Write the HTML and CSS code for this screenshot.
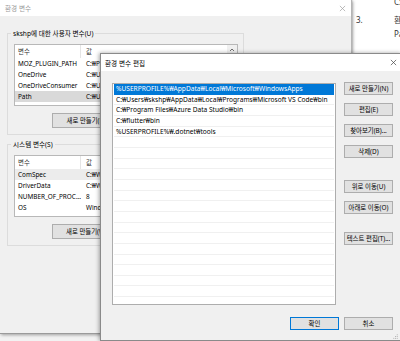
FILE: index.html
```html
<!DOCTYPE html>
<html lang="ko">
<head>
<meta charset="UTF-8">
<title>환경 변수 편집</title>
<link rel="stylesheet" href="styles.css">
</head>

<body>

<div class="desk">

  <div class="doc">
    <p class="doc-line doc-indent">C:₩Users₩skshp</p>
    <p class="doc-line doc-item"><span class="doc-num">3.</span>환경 변수에서</p>
    <p class="doc-line doc-indent">Path를 선택합니다.</p>
  </div>

  <div class="win win-back">
    <div class="titlebar inactive">
      <span class="title">환경 변수</span>
      <svg class="close" viewBox="0 0 8 8"><path d="M1 1L7 7M7 1L1 7"/></svg>
    </div>
    <div class="win-body">

      <div class="group">
        <span class="group-label">skshp에 대한 사용자 변수(U)</span>
        <div class="listview">
          <div class="lv-table">
            <div class="lv-head"><span class="lv-name">변수</span><span class="lv-value">값</span></div>
            <div class="lv-row"><span class="lv-name">MOZ_PLUGIN_PATH</span><span class="lv-value">C:₩Program Files (x86)₩Foxit Software₩Foxit PDF Reader₩plugins₩</span></div>
            <div class="lv-row"><span class="lv-name">OneDrive</span><span class="lv-value">C:₩Users₩skshp₩OneDrive</span></div>
            <div class="lv-row"><span class="lv-name">OneDriveConsumer</span><span class="lv-value">C:₩Users₩skshp₩OneDrive</span></div>
            <div class="lv-row lv-selected"><span class="lv-name">Path</span><span class="lv-value">C:₩Users₩skshp₩AppData₩Local₩Microsoft₩WindowsApps;</span></div>
          </div>
          <div class="lv-scroll">
            <svg class="lv-arrow" viewBox="0 0 8 8"><path d="M2 5L4 3L6 5"/></svg>
          </div>
        </div>
        <div class="group-buttons">
          <button class="btn btn-wide">새로 만들기(N)...</button>
          <button class="btn btn-wide">편집(I)...</button>
          <button class="btn btn-wide">삭제(L)</button>
        </div>
      </div>

      <div class="group group-system">
        <span class="group-label">시스템 변수(S)</span>
        <div class="listview">
          <div class="lv-table">
            <div class="lv-head"><span class="lv-name">변수</span><span class="lv-value">값</span></div>
            <div class="lv-row lv-soft"><span class="lv-name">ComSpec</span><span class="lv-value">C:₩WINDOWS₩system32₩cmd.exe</span></div>
            <div class="lv-row"><span class="lv-name">DriverData</span><span class="lv-value">C:₩Windows₩System32₩Drivers₩DriverData</span></div>
            <div class="lv-row"><span class="lv-name">NUMBER_OF_PROCESSORS</span><span class="lv-value">8</span></div>
            <div class="lv-row"><span class="lv-name">OS</span><span class="lv-value">Windows_NT</span></div>
            <div class="lv-row"><span class="lv-name">Path</span><span class="lv-value">C:₩WINDOWS₩system32;C:₩WINDOWS</span></div>
          </div>
        </div>
        <div class="group-buttons">
          <button class="btn btn-wide">새로 만들기(W)...</button>
          <button class="btn btn-wide">편집(I)...</button>
          <button class="btn btn-wide">삭제(L)</button>
        </div>
      </div>

    </div>
  </div>

  <div class="win win-front">
    <div class="titlebar">
      <span class="title">환경 변수 편집</span>
      <svg class="close" viewBox="0 0 8 8"><path d="M1 1L7 7M7 1L1 7"/></svg>
    </div>
    <div class="edit-body">
      <div class="path-list">
        <div class="path-row path-selected">%USERPROFILE%₩AppData₩Local₩Microsoft₩WindowsApps</div>
        <div class="path-row">C:₩Users₩skshp₩AppData₩Local₩Programs₩Microsoft VS Code₩bin</div>
        <div class="path-row">C:₩Program Files₩Azure Data Studio₩bin</div>
        <div class="path-row">C:₩flutter₩bin</div>
        <div class="path-row">%USERPROFILE%₩.dotnet₩tools</div>
        <div class="path-row"></div>
        <div class="path-row"></div>
        <div class="path-row"></div>
        <div class="path-row"></div>
        <div class="path-row"></div>
        <div class="path-row"></div>
        <div class="path-row"></div>
        <div class="path-row"></div>
        <div class="path-row"></div>
        <div class="path-row"></div>
        <div class="path-row"></div>
        <div class="path-row"></div>
        <div class="path-row"></div>
        <div class="path-row"></div>
        <div class="path-row"></div>
        <div class="path-row"></div>
      </div>
      <div class="side-buttons">
        <button class="btn">새로 만들기(N)</button>
        <button class="btn">편집(E)</button>
        <button class="btn">찾아보기(B)...</button>
        <button class="btn">삭제(D)</button>
        <button class="btn btn-gap">위로 이동(U)</button>
        <button class="btn">아래로 이동(O)</button>
        <button class="btn btn-gap-sm">텍스트 편집(T)...</button>
      </div>
    </div>
    <div class="edit-footer">
      <button class="btn btn-default">확인</button>
      <button class="btn">취소</button>
    </div>
    <svg class="grip" viewBox="0 0 6 6">
      <circle cx="5" cy="1" r="0.6"/>
      <circle cx="5" cy="3" r="0.6"/>
      <circle cx="3" cy="3" r="0.6"/>
      <circle cx="5" cy="5" r="0.6"/>
      <circle cx="3" cy="5" r="0.6"/>
      <circle cx="1" cy="5" r="0.6"/>
    </svg>
  </div>

</div>

</body>
</html>
```

FILE: styles.css
```css
* {
  box-sizing: border-box;
}
body {
  margin: 0;
  font-family: "Noto Sans", "Noto Sans CJK KR", sans-serif;
  font-size: 6.4px;
  color: #000;
  background-color: #fff;
}
.desk {
  position: relative;
  width: 400px;
  height: 341px;
  overflow: hidden;
  background-color: #f2f2f2;
}

/* document behind, on the right */
.doc {
  position: absolute;
  left: 353px;
  top: 0;
  width: 47px;
  height: 53px;
  padding: 0 0 0 3px;
  overflow: hidden;
  background-color: #fff;
  color: #333;
  font-size: 8px;
}
.doc-line {
  margin: 0;
  line-height: 14px;
  white-space: nowrap;
}
.doc-line:first-child {
  margin-top: -5px;
  margin-bottom: 4px;
}
.doc-indent {
  padding-left: 38px;
}
.doc-num {
  display: inline-block;
  width: 38px;
}

/* windows */
.win {
  position: absolute;
  background-color: #f0f0f0;
}
.win-back {
  left: 0;
  top: 0;
  width: 352px;
  height: 334px;
  border-right: 1px solid #b4b4b4;
  border-bottom: 1px solid #9a9a9a;
  box-shadow: 1px 1px 3px rgba(0,0,0,.35);
}
.win-front {
  left: 100px;
  top: 53px;
  width: 302px;
  height: 288px;
  border: 1px solid #8a8a8a;
  box-shadow: -1px 0 4px rgba(0,0,0,.35);
  display: flex;
  flex-direction: column;
}
.titlebar {
  display: flex;
  align-items: center;
  justify-content: space-between;
  height: 16px;
  padding: 0 5.5px 0 5px;
  background-color: #fff;
}
.win-front .titlebar {
  height: 17px;
  padding: 0 4.5px 0 4px;
}
.title {
  font-family: "Noto Sans CJK KR", sans-serif;
  font-size: 6.6px;
}
.inactive .title {
  color: #9a9a9a;
}
.close {
  width: 7px;
  height: 7px;
  fill: none;
  stroke: #a0a0a0;
  stroke-width: 0.8;
}
.win-front .close {
  stroke: #444;
}

/* back dialog body */
.win-body {
  padding: 17px 0 0 7px;
}
.group {
  width: 237px;
  border: 1px solid #dcdcdc;
  padding: 0 5px 6px 6px;
}
.group-system {
  margin-top: 9px;
}
.group-label {
  display: block;
  width: fit-content;
  margin: -6px 0 0 -3px;
  padding: 0 2px;
  line-height: 11px;
  background-color: #f0f0f0;
  font-size: 6.6px;
}
.listview {
  display: flex;
  width: 224px;
  height: 62px;
  margin-top: 5px;
  background-color: #fff;
  border: 1px solid #b8b8b8;
  overflow: hidden;
}
.lv-table {
  flex: 1;
  min-width: 0;
}
.lv-head,
.lv-row {
  display: flex;
  white-space: nowrap;
}
.lv-head {
  height: 13px;
  line-height: 13px;
  color: #333;
}
.lv-row {
  height: 11px;
  line-height: 11px;
}
.lv-name {
  flex: none;
  width: 66px;
  padding-left: 3px;
  overflow: hidden;
  text-overflow: ellipsis;
}
.lv-head .lv-name {
  border-right: 1px solid #e5e5e5;
}
.lv-value {
  flex: 1;
  min-width: 0;
  padding-left: 5px;
  overflow: hidden;
}
.lv-selected {
  background-color: #d9d9d9;
}
.lv-soft {
  background-color: #ececec;
}
.lv-scroll {
  flex: none;
  width: 10px;
  background-color: #f0f0f0;
  display: flex;
  justify-content: center;
}
.lv-arrow {
  width: 8px;
  height: 8px;
  margin-top: 1px;
  fill: none;
  stroke: #606060;
  stroke-width: 0.9;
}
.group-buttons {
  display: flex;
  gap: 6px;
  margin: 7px 0 0 38px;
}

/* buttons */
.btn {
  height: 13px;
  padding: 0;
  border: 1px solid #adadad;
  background-color: #e1e1e1;
  font-family: "Noto Sans", "Noto Sans CJK KR", sans-serif;
  font-size: 6.4px;
  line-height: 11px;
  color: #000;
  white-space: nowrap;
  overflow: hidden;
}
.btn-wide {
  flex: none;
  width: 74px;
  height: 15px;
}
.btn-default {
  border-color: #0078d7;
}

/* front dialog body */
.edit-body {
  display: flex;
  gap: 8px;
  padding: 12px 0 0 11px;
}
.path-list {
  width: 224px;
  height: 222px;
  padding: 0 1px;
  background-color: #fff;
  border: 1px solid #adadad;
  overflow: hidden;
  font-size: 6.6px;
}
.path-row {
  height: 10.67px;
  line-height: 10px;
  padding-left: 2px;
  border-bottom: 1px solid #f0f0f0;
  white-space: nowrap;
  overflow: hidden;
}
.path-selected {
  background-color: #0078d7;
  border-bottom-color: #0078d7;
  color: #fff;
}
.side-buttons {
  display: flex;
  flex-direction: column;
  gap: 8px;
  width: 49px;
  margin-top: -1px;
}
.side-buttons .btn {
  width: 49px;
}
.btn-gap {
  margin-top: 14px;
}
.btn-gap-sm {
  margin-top: 10px;
}
.edit-footer {
  display: flex;
  justify-content: flex-end;
  gap: 5px;
  margin-top: 12px;
  padding-right: 8px;
}
.edit-footer .btn {
  width: 49px;
}
.grip {
  position: absolute;
  right: 3px;
  bottom: 1px;
  width: 5px;
  height: 5px;
  fill: #a0a0a0;
}
```
